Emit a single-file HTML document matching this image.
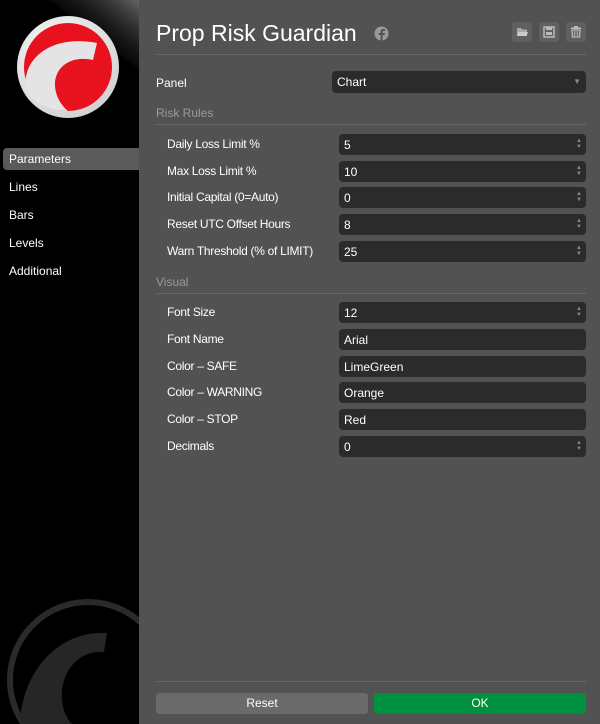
<!DOCTYPE html>
<html><head><style>
*{margin:0;padding:0;box-sizing:border-box}
body{width:600px;height:724px;background:#525252;font-family:"Liberation Sans",Arial,sans-serif;position:relative;overflow:hidden;color:#fff;font-size:12px}
.side{position:absolute;left:0;top:0;width:139px;height:724px;background:#000;overflow:hidden}
.nav{position:absolute;left:9px;font-size:12px;color:#fff}
.sel{position:absolute;left:3px;top:148px;width:136px;height:22px;background:#5a5a5a;border-radius:4px 0 0 4px}
.a{position:absolute}
.lbl{position:absolute;left:167px;font-size:12px;color:#fff;letter-spacing:-0.3px}
.inp{position:absolute;left:339px;width:247px;height:21px;background:#2b2b2b;border-radius:4px;padding-left:5px;padding-top:1px;line-height:21px;font-size:12px;color:#fff}
.sp{position:absolute;right:4px;top:4px;font-size:6px;line-height:6px;color:#888}
.h{position:absolute;left:156px;color:#9a9a9a;font-size:12px}
.ln{position:absolute;left:156px;width:430px;height:1px;background:#666}
.ib{position:absolute;top:22px;width:20px;height:20px;background:#606060;border-radius:3px}
</style></head><body>
<div class="side">
<svg width="139" height="724" style="position:absolute;left:0;top:0">
<defs><linearGradient id="g" x1="1" y1="0" x2="0.3" y2="0.7"><stop offset="0" stop-color="#666"/><stop offset="1" stop-color="#000" stop-opacity="0"/></linearGradient>
<radialGradient id="w" cx="0.4" cy="0.35" r="0.7"><stop offset="0" stop-color="#fff"/><stop offset="1" stop-color="#d0d0d0"/></radialGradient></defs>
<polygon points="50,0 139,0 139,70" fill="url(#g)"/>
<circle cx="68" cy="67" r="51" fill="url(#w)"/>
<circle cx="68" cy="67" r="44" fill="#e8121e"/>
<path d="M26,88 C22,60 50,34 97,43 L93,60 C70,55 54,68 55,86 C56,98 62,106 68,111 C48,110 30,102 26,88 Z" fill="#e4e4e4"/>
<circle cx="88" cy="680" r="78" fill="none" stroke="#2a2a2a" stroke-width="6"/>
<path d="M20,724 C22,670 60,630 107,633 L104,652 C80,650 60,670 62,700 C63,712 68,720 72,724 Z" fill="#262626"/>
</svg>
<div class="sel"></div>
<div class="nav" style="top:152px">Parameters</div>
<div class="nav" style="top:180px">Lines</div>
<div class="nav" style="top:208px">Bars</div>
<div class="nav" style="top:236px">Levels</div>
<div class="nav" style="top:264px">Additional</div>
</div>

<div class="a" style="left:156px;top:20px;font-size:23px;color:#fff">Prop Risk Guardian</div>
<svg class="a" style="left:374px;top:26px" width="15" height="15"><circle cx="7.5" cy="7.5" r="7" fill="#999"/><path d="M8.5,15 V9 H10.5 L11,7 H8.5 V5.8 C8.5,5.2 8.8,5 9.4,5 H11 V3.2 C10.5,3.1 9.8,3 9.1,3 C7.6,3 6.6,4 6.6,5.5 V7 H4.8 V9 H6.6 V15 Z" fill="#525252"/></svg>
<div class="ib" style="left:512px"><svg width="20" height="20"><path d="M5,6 H9 L10,7.5 H15 V14 H5 Z" fill="#aaa"/><path d="M6.5,10 H16 L14.5,14 H5 Z" fill="#ccc"/></svg></div>
<div class="ib" style="left:539px"><svg width="20" height="20"><rect x="5" y="5" width="10" height="10" fill="none" stroke="#bbb" stroke-width="1.5"/><rect x="7" y="5" width="6" height="3" fill="#bbb"/><rect x="7" y="10" width="6" height="3" fill="#bbb"/></svg></div>
<div class="ib" style="left:566px"><svg width="20" height="20"><rect x="5" y="5.5" width="10" height="1.5" fill="#bbb"/><rect x="8" y="4" width="4" height="1.5" fill="#bbb"/><path d="M6,8 H14 L13.5,15 H6.5 Z" fill="none" stroke="#bbb" stroke-width="1.3"/><path d="M8.7,9 V14 M11.3,9 V14" stroke="#bbb"/></svg></div>
<div class="ln" style="top:54px"></div>

<div class="a" style="left:156px;top:76px">Panel</div>
<div class="inp" style="left:332px;top:71px;width:254px;height:22px;line-height:22px;padding-top:0">Chart<span class="a" style="right:5px;top:0;font-size:8px;color:#888">▼</span></div>

<div class="h" style="top:106px">Risk Rules</div>
<div class="ln" style="top:124px"></div>

<div class="lbl" style="top:137px">Daily Loss Limit %</div>
<div class="inp" style="top:134px">5<div class="sp">▲<br>▼</div></div>
<div class="lbl" style="top:164px">Max Loss Limit %</div>
<div class="inp" style="top:161px">10<div class="sp">▲<br>▼</div></div>
<div class="lbl" style="top:190px">Initial Capital (0=Auto)</div>
<div class="inp" style="top:187px">0<div class="sp">▲<br>▼</div></div>
<div class="lbl" style="top:217px">Reset UTC Offset Hours</div>
<div class="inp" style="top:214px">8<div class="sp">▲<br>▼</div></div>
<div class="lbl" style="top:244px">Warn Threshold (% of LIMIT)</div>
<div class="inp" style="top:241px">25<div class="sp">▲<br>▼</div></div>

<div class="h" style="top:275px">Visual</div>
<div class="ln" style="top:293px"></div>

<div class="lbl" style="top:305px">Font Size</div>
<div class="inp" style="top:302px">12<div class="sp">▲<br>▼</div></div>
<div class="lbl" style="top:332px">Font Name</div>
<div class="inp" style="top:329px">Arial</div>
<div class="lbl" style="top:359px">Color – SAFE</div>
<div class="inp" style="top:356px">LimeGreen</div>
<div class="lbl" style="top:385px">Color – WARNING</div>
<div class="inp" style="top:382px">Orange</div>
<div class="lbl" style="top:412px">Color – STOP</div>
<div class="inp" style="top:409px">Red</div>
<div class="lbl" style="top:439px">Decimals</div>
<div class="inp" style="top:436px">0<div class="sp">▲<br>▼</div></div>

<div class="ln" style="top:681px"></div>
<div class="a" style="left:156px;top:693px;width:212px;height:21px;background:#6a6a6a;border-radius:3px;text-align:center;line-height:21px">Reset</div>
<div class="a" style="left:374px;top:693px;width:212px;height:21px;background:#00913f;border-radius:3px;text-align:center;line-height:21px">OK</div>
</body></html>
